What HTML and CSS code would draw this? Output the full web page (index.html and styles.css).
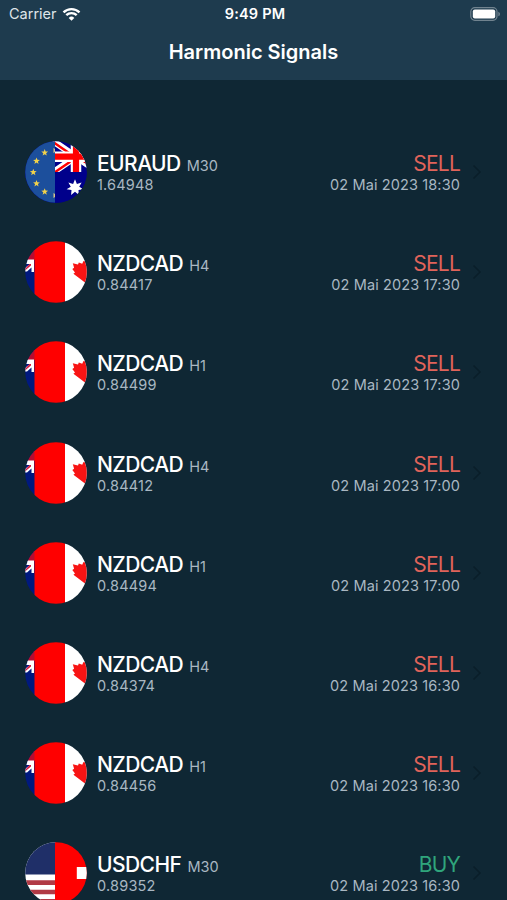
FILE: index.html
```html
<!DOCTYPE html>
<html lang="en">
  <head>
    <meta charset="UTF-8" />
    <meta name="viewport" content="width=device-width, initial-scale=1.0" />
    <title>Harmonic Signals</title>
    <link rel="stylesheet" href="styles.css">
  </head>
  <body>
    <!-- Shared flag and icon shapes -->
    <svg class="defs" width="0" height="0" aria-hidden="true">
      <defs>
        <clipPath id="round"><circle cx="31" cy="31" r="30.8" /></clipPath>
        <path id="star" d="M0-3.6 .9-1.2 3.4-1.1 1.4.5 2.1 2.9 0 1.5-2.1 2.9-1.4.5-3.4-1.1-.9-1.2Z" fill="#f2d24a" />
        <symbol id="euraud" viewBox="0 0 62 62">
          <g clip-path="url(#round)">
            <rect width="62" height="62" fill="#00008b" />
            <path d="M28 0 74 31.400M28 31.400 74 0" stroke="#fff" stroke-width="6.500" />
            <path d="M28 1 51 16.700M28 32.400 51 16.700M51 14.700 74-1M51 14.700 74 30.400" stroke="#f00" stroke-width="2.400" />
            <path d="M51 0v31M28 15.700h40" stroke="#fff" stroke-width="10.500" />
            <path d="M51 0v31M28 15.700h40" stroke="#f00" stroke-width="6.200" />
            <rect y="31" width="62" height="31" fill="#00008b" />
            <rect width="30" height="62" fill="#1c4f9c" />
            <use href="#star" x="19.700" y="11.700" />
            <use href="#star" x="11.500" y="20" />
            <use href="#star" x="8.300" y="31.300" />
            <use href="#star" x="11.500" y="42.500" />
            <use href="#star" x="19.700" y="50.800" />
            <path d="M28.500 7l1.500 1v3l-1.500 1zM28.500 52l1.500 1v3l-1.500 1z" fill="#d8c58a" />
            <path d="M50 38.300l1.900 4.600 4.700-1.400-2.400 4.200 4.200 2.600-4.900.8.400 5-3.900-3.300-3.900 3.300.4-5-4.900-.8 4.200-2.600-2.400-4.200 4.700 1.400z" fill="#fff" />
          </g>
        </symbol>
        <symbol id="nzdcad" viewBox="0 0 62 62">
          <g clip-path="url(#round)">
            <rect width="10" height="62" fill="#00197f" />
            <path d="M0 9h10v10H0z" fill="#b80c30" />
            <path d="M0 18.500h9V31H6.500v-4.500L2 30.500H0V27l5-4H0z" fill="#fff" />
            <path d="M6 23v1.500l-6 5V28l4.500-5z" fill="#d21c40" />
            <rect x="9.500" width="30.500" height="62" fill="#f00" />
            <rect x="40" width="22" height="62" fill="#fff" />
            <path d="M47.800 22.300l5.200 1.300.8-2.200 3.400 1.400L58.500 20l4.500 1v22l-4-2.300-10.600-7.900 1.600-1.300-2.700-3.600 1.800-1.200z" fill="#f81414" />
          </g>
        </symbol>
        <symbol id="usdchf" viewBox="0 0 62 62">
          <g clip-path="url(#round)">
            <rect width="31" height="62" fill="#fff" />
            <rect width="31" height="32.500" fill="#1f2f68" />
            <path d="M0 38.300h31v4.600H0zM0 47.700h31v4.600H0zM0 57h31v5H0z" fill="#b13a45" />
            <rect x="30" width="32" height="62" fill="#f00" />
            <rect x="51.800" y="25" width="12" height="12" fill="#fff" />
          </g>
        </symbol>
        <symbol id="chevron" viewBox="0 0 10 16">
          <path d="M1.500 1.500 8 8l-6.500 6.500" fill="none" stroke="#0a1e29" stroke-width="1.500" />
        </symbol>
      </defs>
    </svg>

    <header class="header">
      <div class="status-bar">
        <div class="carrier">
          <span>Carrier</span>
          <svg class="wifi" viewBox="0 0 18 14">
            <path d="M1 5.300a11.600 11.600 0 0 1 16 0" />
            <path d="M3.800 8.200a7.500 7.500 0 0 1 10.400 0" />
            <path class="wifi-dot" d="M9 13.700 6.200 10.900a4 4 0 0 1 5.600 0z" />
          </svg>
        </div>
        <span class="clock">9:49 PM</span>
        <svg class="battery" viewBox="0 0 31 14">
          <rect x=".8" y=".7" width="26.200" height="12.600" rx="4" fill="none" stroke="#71838f" stroke-width="1.200" />
          <rect x="2.800" y="2.500" width="22.400" height="9" rx="2" fill="#fff" />
          <path d="M28.300 4.700c2.200.9 2.200 3.700 0 4.600z" fill="#71838f" />
        </svg>
      </div>
      <h1 class="title">Harmonic Signals</h1>
    </header>

    <main class="signals">
      <div class="signal">
        <svg class="flag"><use href="#euraud" /></svg>
        <div class="pair">
          <div class="top"><span class="name">EURAUD</span><span class="frame">M30</span></div>
          <div class="price">1.64948</div>
        </div>
        <div class="info">
          <div class="side sell">SELL</div>
          <div class="date">02 Mai 2023 18:30</div>
        </div>
        <svg class="chevron"><use href="#chevron" /></svg>
      </div>

      <div class="signal">
        <svg class="flag"><use href="#nzdcad" /></svg>
        <div class="pair">
          <div class="top"><span class="name">NZDCAD</span><span class="frame">H4</span></div>
          <div class="price">0.84417</div>
        </div>
        <div class="info">
          <div class="side sell">SELL</div>
          <div class="date">02 Mai 2023 17:30</div>
        </div>
        <svg class="chevron"><use href="#chevron" /></svg>
      </div>

      <div class="signal">
        <svg class="flag"><use href="#nzdcad" /></svg>
        <div class="pair">
          <div class="top"><span class="name">NZDCAD</span><span class="frame">H1</span></div>
          <div class="price">0.84499</div>
        </div>
        <div class="info">
          <div class="side sell">SELL</div>
          <div class="date">02 Mai 2023 17:30</div>
        </div>
        <svg class="chevron"><use href="#chevron" /></svg>
      </div>

      <div class="signal">
        <svg class="flag"><use href="#nzdcad" /></svg>
        <div class="pair">
          <div class="top"><span class="name">NZDCAD</span><span class="frame">H4</span></div>
          <div class="price">0.84412</div>
        </div>
        <div class="info">
          <div class="side sell">SELL</div>
          <div class="date">02 Mai 2023 17:00</div>
        </div>
        <svg class="chevron"><use href="#chevron" /></svg>
      </div>

      <div class="signal">
        <svg class="flag"><use href="#nzdcad" /></svg>
        <div class="pair">
          <div class="top"><span class="name">NZDCAD</span><span class="frame">H1</span></div>
          <div class="price">0.84494</div>
        </div>
        <div class="info">
          <div class="side sell">SELL</div>
          <div class="date">02 Mai 2023 17:00</div>
        </div>
        <svg class="chevron"><use href="#chevron" /></svg>
      </div>

      <div class="signal">
        <svg class="flag"><use href="#nzdcad" /></svg>
        <div class="pair">
          <div class="top"><span class="name">NZDCAD</span><span class="frame">H4</span></div>
          <div class="price">0.84374</div>
        </div>
        <div class="info">
          <div class="side sell">SELL</div>
          <div class="date">02 Mai 2023 16:30</div>
        </div>
        <svg class="chevron"><use href="#chevron" /></svg>
      </div>

      <div class="signal">
        <svg class="flag"><use href="#nzdcad" /></svg>
        <div class="pair">
          <div class="top"><span class="name">NZDCAD</span><span class="frame">H1</span></div>
          <div class="price">0.84456</div>
        </div>
        <div class="info">
          <div class="side sell">SELL</div>
          <div class="date">02 Mai 2023 16:30</div>
        </div>
        <svg class="chevron"><use href="#chevron" /></svg>
      </div>

      <div class="signal">
        <svg class="flag"><use href="#usdchf" /></svg>
        <div class="pair">
          <div class="top"><span class="name">USDCHF</span><span class="frame">M30</span></div>
          <div class="price">0.89352</div>
        </div>
        <div class="info">
          <div class="side buy">BUY</div>
          <div class="date">02 Mai 2023 16:30</div>
        </div>
        <svg class="chevron"><use href="#chevron" /></svg>
      </div>
    </main>
  </body>
</html>
```
FILE: styles.css
```css
body {
  margin: 0;
  height: 900px;
  overflow: hidden;
  background: #0f2734;
  color: #fff;
  font-family: Inter, "Liberation Sans", sans-serif;
}

.defs {
  position: absolute;
}

.header {
  height: 80px;
  background: #1e3b4e;
}

.status-bar {
  display: grid;
  grid-template-columns: 1fr auto 1fr;
  align-items: center;
  height: 27px;
  padding: 0 6px 0 9px;
  font-size: 14.5px;
}

.carrier {
  display: flex;
  align-items: center;
  gap: 5px;
  color: #dfe5e9;
}

.wifi {
  width: 19px;
  height: 14px;
  fill: none;
  stroke: #fff;
  stroke-width: 2.4;
}

.wifi .wifi-dot {
  fill: #fff;
  stroke: none;
}

.clock {
  font-weight: 600;
  letter-spacing: 0.2px;
}

.battery {
  justify-self: end;
  width: 31px;
  height: 14px;
}

.title {
  margin: 0;
  font-size: 20px;
  font-weight: 600;
  line-height: 51px;
  text-align: center;
}

.signals {
  padding-top: 42px;
}

.signal {
  display: flex;
  align-items: center;
  height: 100.2px;
  padding: 0 25px;
}

.flag {
  flex: none;
  width: 62px;
  height: 62px;
}

.pair {
  flex: 1;
  padding-top: 4px;
  margin-left: 10px;
}

.top,
.price,
.side,
.date {
  height: 21px;
  line-height: 21px;
  white-space: nowrap;
}

.name {
  font-size: 21px;
  font-weight: 500;
  letter-spacing: -0.55px;
}

.frame {
  margin-left: 6px;
}

.frame,
.price,
.date {
  font-size: 14.5px;
  color: #a9b7c2;
}

.price {
  letter-spacing: 0.2px;
}

.date {
  letter-spacing: 0.12px;
}

.info {
  padding-top: 4px;
  text-align: right;
}

.side {
  font-size: 21px;
  letter-spacing: -0.8px;
}

.sell {
  color: #e0635a;
}

.buy {
  color: #2fa57c;
}

.chevron {
  flex: none;
  width: 10px;
  height: 16px;
  margin-left: 12px;
}
```
